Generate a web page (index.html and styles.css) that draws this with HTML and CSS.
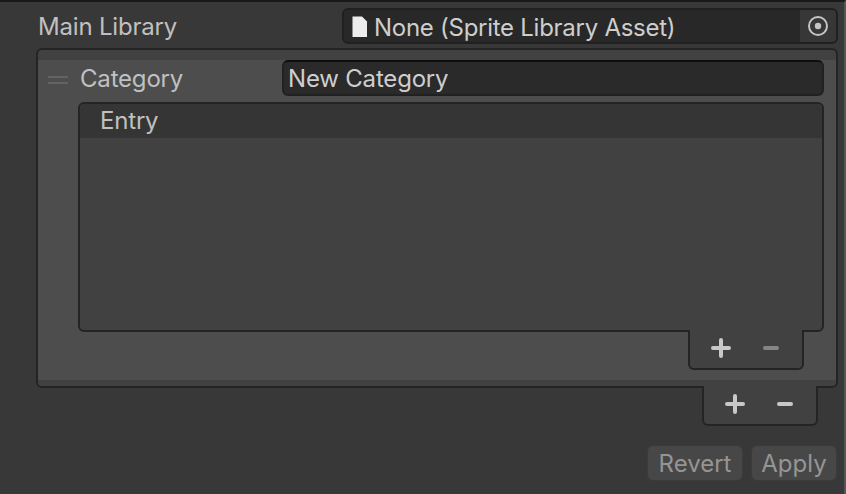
FILE: index.html
```
<!DOCTYPE html>
<html lang="en">
<head>
<meta charset="utf-8">
<title>Sprite Library</title>
<link rel="stylesheet" href="styles.css">
</head>
<body>
<main class="inspector">
  <div class="row main-row">
    <span class="label main-label">Main Library</span>
    <div class="object-field">
      <svg class="file-icon" width="16" height="22" viewBox="0 0 16 22"><path d="M.5.5h9.5l5 5V21H.5z" fill="#ededed"/></svg>
      <span class="object-name">None (Sprite Library Asset)</span>
      <div class="picker">
        <svg width="20" height="20" viewBox="0 0 20 20"><circle cx="10" cy="10" r="9" fill="none" stroke="#c4c4c4" stroke-width="2"/><circle cx="10" cy="10" r="3.2" fill="#c4c4c4"/></svg>
      </div>
    </div>
  </div>
  <section class="list">
    <div class="item">
      <div class="row category-row">
        <div class="handle"></div>
        <span class="label category-label">Category</span>
        <div class="text-field">New Category</div>
      </div>
      <section class="entries"><div class="entries-header">Entry</div></section>
      <div class="footer entries-footer">
        <svg width="20" height="20" viewBox="0 0 20 20"><path d="M10 2v16M2 10h16" class="stroke"/></svg>
        <svg class="dim" width="20" height="20" viewBox="0 0 20 20"><path d="M4 10h12" class="stroke"/></svg>
      </div>
    </div>
  </section>
  <div class="footer list-footer">
    <svg width="20" height="20" viewBox="0 0 20 20"><path d="M10 2v16M2 10h16" class="stroke"/></svg>
    <svg width="20" height="20" viewBox="0 0 20 20"><path d="M4 10h12" class="stroke"/></svg>
  </div>
  <div class="actions">
    <div class="button revert">Revert</div>
    <div class="button apply">Apply</div>
  </div>
</main>
</body>
</html>
```
FILE: styles.css
```
* { box-sizing: border-box; }
body { margin: 0; background: #383838; }
.inspector {
  width: 846px;
  height: 494px;
  padding: 6px 6px 0 36px;
  border-top: 2px solid #191919;
  border-right: 2px solid #555;
  overflow: hidden;
  font: 400 24px/32px Inter, sans-serif;
  letter-spacing: -.19px;
  color: #c0c0c0;
}
.row { display: flex; }
.main-row { height: 36px; }
.label { flex: none; }
.main-label { width: 306px; padding: 3px 0 0 2px; }
.object-field {
  flex: 1;
  display: flex;
  border: 2px solid #202020;
  border-radius: 6px;
  background: #282828;
  color: #cecece;
  overflow: hidden;
}
.file-icon { margin: 6px 6px 0 8px; }
.object-name { flex: 1; padding-top: 2px; white-space: nowrap; letter-spacing: -.27px; }
.picker { width: 36px; padding: 6px 0 0 8px; background: #373737; }
.picker svg { display: block; }
.list {
  height: 340px;
  margin-top: 4px;
  padding: 10px 0 6px;
  border: 2px solid #242424;
  border-radius: 6px;
  background: #414141;
}
.item { height: 320px; padding-right: 12px; background: #4d4d4d; }
.category-row { height: 36px; }
.handle {
  width: 20px;
  height: 8px;
  margin: 16px 12px 0 10px;
  border: solid #636363;
  border-width: 2px 0;
}
.category-label { width: 202px; padding-top: 3px; }
.text-field {
  flex: 1;
  padding: 1px 4px;
  border: 2px solid #212121;
  border-top-color: #0d0d0d;
  border-radius: 6px;
  background: #2a2a2a;
  color: #cecece;
}
.entries {
  height: 230px;
  margin: 6px 0 0 40px;
  border: 2px solid #242424;
  border-radius: 6px;
  background: #414141;
  overflow: hidden;
}
.entries-header { height: 34px; padding: 1px 0 0 20px; background: #353535; }
.footer {
  position: relative;
  display: flex;
  width: 116px;
  height: 40px;
  padding: 8px 0 0 21px;
  gap: 30px;
  margin: -2px 20px 0 auto;
  border: 2px solid #242424;
  border-top: 0;
  border-radius: 0 0 6px 6px;
  background: #414141;
}
.stroke { fill: none; stroke: #c8c8c8; stroke-width: 4; stroke-linecap: round; }
.dim .stroke { stroke: #858585; }
.actions { display: flex; justify-content: flex-end; gap: 8px; margin: 19px 1px 0 0; }
.button {
  height: 36px;
  padding-top: 2px;
  border: 1px solid #3b3b3b;
  border-radius: 6px;
  background: #474747;
  color: #959595;
  text-align: center;
  letter-spacing: 0;
}
.revert { width: 96px; }
.apply { width: 86px; }
```
